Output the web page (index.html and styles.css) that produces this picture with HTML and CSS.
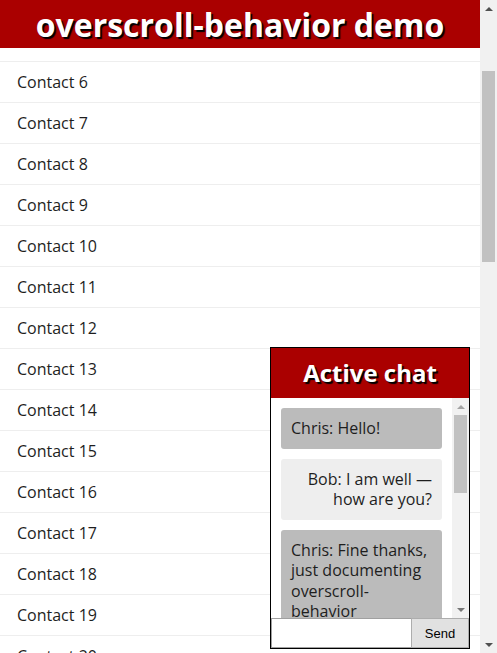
FILE: index.html
```html
<!DOCTYPE html>
<html lang="en">
<head>
<meta charset="utf-8">
<title>overscroll-behavior demo</title>
<link rel="stylesheet" href="styles.css">
</head>
<body>
<div class="page">
  <div class="page-main">
    <header class="page-header">
      <h1 class="page-title">overscroll-behavior demo</h1>
    </header>
    <main class="list-viewport">
      <ul class="contacts">
        <li class="contact">Contact 5</li>
        <li class="contact">Contact 6</li>
        <li class="contact">Contact 7</li>
        <li class="contact">Contact 8</li>
        <li class="contact">Contact 9</li>
        <li class="contact">Contact 10</li>
        <li class="contact">Contact 11</li>
        <li class="contact">Contact 12</li>
        <li class="contact">Contact 13</li>
        <li class="contact">Contact 14</li>
        <li class="contact">Contact 15</li>
        <li class="contact">Contact 16</li>
        <li class="contact">Contact 17</li>
        <li class="contact">Contact 18</li>
        <li class="contact">Contact 19</li>
        <li class="contact">Contact 20</li>
      </ul>
    </main>
  </div>
  <div class="scrollbar page-scrollbar">
    <div class="sb-button"><span class="arrow-up"></span></div>
    <div class="sb-track"><div class="sb-thumb page-thumb"></div></div>
    <div class="sb-button"><span class="arrow-down"></span></div>
  </div>
</div>
<section class="chatbox">
  <header class="chat-header">
    <h2 class="chat-title">Active chat</h2>
  </header>
  <div class="messages-wrap">
    <div class="messages">
      <p class="msg me">Chris: Hello!</p>
      <p class="msg you">Bob: I am well — how are you?</p>
      <p class="msg me">Chris: Fine thanks, just documenting overscroll-behavior</p>
      <p class="msg you">Bob: Sounds interesting!</p>
    </div>
    <div class="scrollbar chat-scrollbar">
      <div class="sb-button"><span class="arrow-up light"></span></div>
      <div class="sb-track"><div class="sb-thumb chat-thumb"></div></div>
      <div class="sb-button"><span class="arrow-down light"></span></div>
    </div>
  </div>
  <form class="chat-form">
    <input class="chat-input" type="text" aria-label="Enter your chat message">
    <button class="chat-send" type="button">Send</button>
  </form>
</section>
</body>
</html>
```
FILE: styles.css
```css
html {
  font-family: "Open Sans", "Noto Sans", sans-serif;
  color: #1e1e1e;
}
body {
  margin: 0;
  overflow: hidden;
}
.page {
  display: flex;
  height: 653px;
}
.page-main {
  flex: 1;
  min-width: 0;
  display: flex;
  flex-direction: column;
  overflow: hidden;
}
.page-header {
  height: 48px;
  flex: none;
  background: #a00;
  position: relative;
  z-index: 2;
}
.page-title {
  margin: 0;
  font-size: 32px;
  font-weight: 700;
  line-height: 49px;
  text-align: center;
  color: #fff;
  text-shadow: 2px 2px 1px #000;
}
.list-viewport {
  flex: 1;
  overflow: hidden;
}
.contacts {
  list-style: none;
  margin: -27px 0 0;
  padding: 0;
}
.contact {
  height: 40px;
  line-height: 40px;
  padding: 0 17px;
  font-size: 16px;
  border-bottom: 1px solid #eee;
}

/* scrollbars */
.scrollbar {
  width: 17px;
  flex: none;
  display: flex;
  flex-direction: column;
  background: #f1f1f1;
}
.sb-button {
  height: 17px;
  flex: none;
  display: flex;
  align-items: center;
  justify-content: center;
}
.sb-track {
  flex: 1;
  padding: 0 2px;
}
.sb-thumb {
  background: #c1c1c1;
}
.page-thumb {
  margin-top: 54px;
  height: 191px;
}
.chat-thumb {
  margin-top: 0;
  height: 78px;
}
.arrow-up {
  width: 0;
  height: 0;
  border-left: 4px solid transparent;
  border-right: 4px solid transparent;
  border-bottom: 4px solid #505050;
}
.arrow-down {
  width: 0;
  height: 0;
  border-left: 4px solid transparent;
  border-right: 4px solid transparent;
  border-top: 4px solid #505050;
}
.arrow-up.light {
  border-bottom-color: #a3a3a3;
}
.arrow-down.light {
  border-top-color: #777;
}

/* chat */
.chatbox {
  position: fixed;
  right: 27px;
  bottom: 4px;
  width: 198px;
  height: 300px;
  border: 1px solid #000;
  background: #fff;
  display: flex;
  flex-direction: column;
  z-index: 3;
}
.chat-header {
  height: 50px;
  background: #a00;
  flex: none;
}
.chat-title {
  margin: 0;
  font-size: 24px;
  font-weight: 700;
  line-height: 50px;
  text-align: center;
  color: #fff;
  text-shadow: 2px 2px 1px #000;
}
.messages-wrap {
  height: 220px;
  flex: none;
  display: flex;
}
.messages {
  flex: 1;
  min-width: 0;
  overflow: hidden;
  padding-top: 10px;
}
.msg {
  margin: 0 10px 10px;
  padding: 10px;
  border-radius: 3px;
  font-size: 16px;
  line-height: 20.5px;
}
.me {
  background: #bbb;
}
.you {
  background: #eee;
  text-align: right;
}
.chat-form {
  display: flex;
  height: 30px;
  margin: 0;
  flex: none;
}
.chat-input {
  flex: 1;
  min-width: 0;
  margin: 0;
  box-sizing: border-box;
  height: 30px;
  border: 1px solid #a0a0a0;
  border-right: none;
  background: #fff;
}
.chat-send {
  width: 58px;
  height: 30px;
  margin: 0;
  box-sizing: border-box;
  border: 1px solid #adadad;
  background: #e1e1e1;
  font-family: "Liberation Sans", Arial, sans-serif;
  font-size: 13px;
  color: #000;
  padding: 0;
}
```
